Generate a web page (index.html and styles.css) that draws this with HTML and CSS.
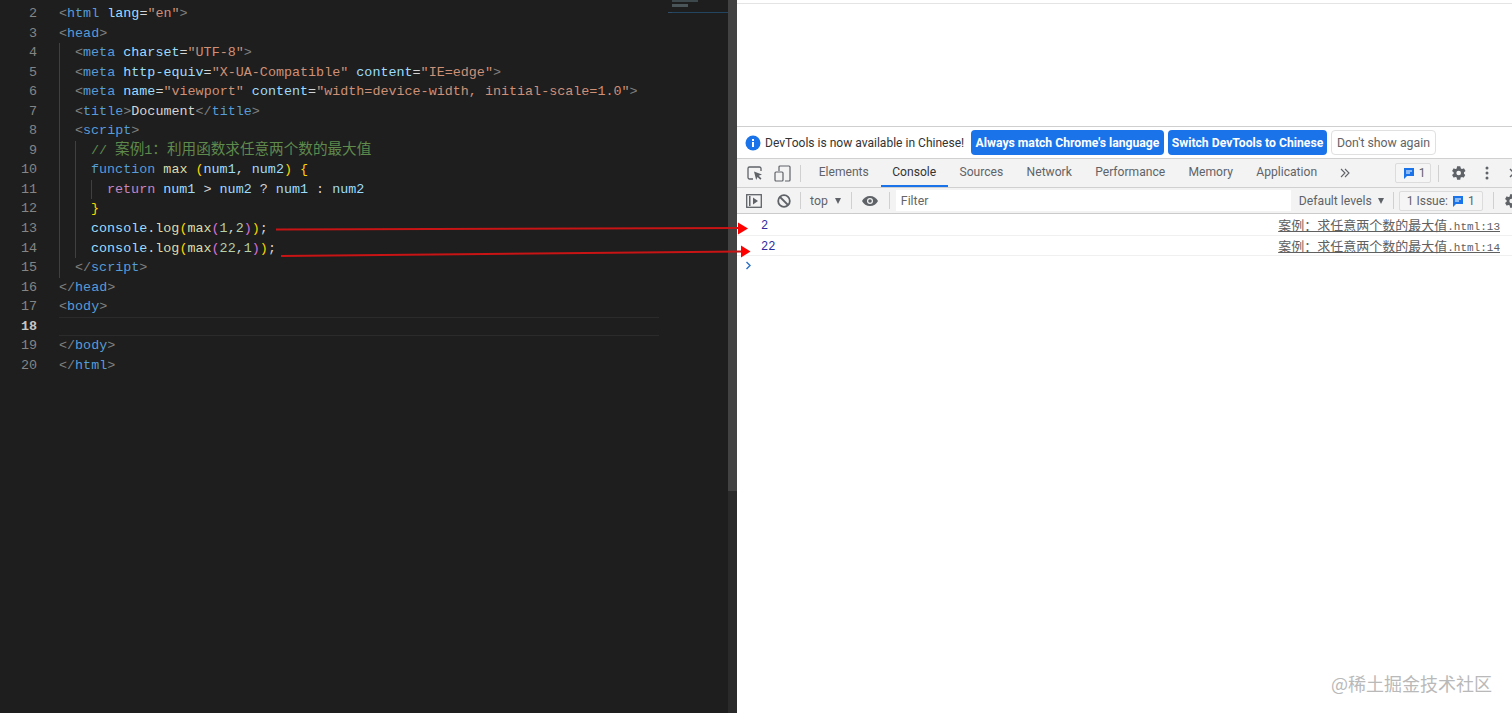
FILE: index.html
```html
<!DOCTYPE html>
<html lang="en">
<head>
    <meta charset="UTF-8">
    <meta name="viewport" content="width=device-width, initial-scale=1.0">
    <title>Max of two numbers</title>
    <link rel="stylesheet" href="styles.css">
</head>
<body>

<div class="page">
    <div class="editor">
        <div class="gutter">
            <div>2</div><div>3</div><div>4</div><div>5</div><div>6</div><div>7</div><div>8</div><div>9</div><div>10</div>
            <div>11</div><div>12</div><div>13</div><div>14</div><div>15</div><div>16</div><div>17</div>
            <div class="active-num">18</div><div>19</div><div>20</div>
        </div>
        <div class="code">
            <div class="line"><i>&lt;</i><b>html</b> <u>lang</u><em>=</em><s>"en"</s><i>&gt;</i></div>
            <div class="line"><i>&lt;</i><b>head</b><i>&gt;</i></div>
            <div class="line"><span class="ind"></span><i>&lt;</i><b>meta</b> <u>charset</u><em>=</em><s>"UTF-8"</s><i>&gt;</i></div>
            <div class="line"><span class="ind"></span><i>&lt;</i><b>meta</b> <u>http-equiv</u><em>=</em><s>"X-UA-Compatible"</s> <u>content</u><em>=</em><s>"IE=edge"</s><i>&gt;</i></div>
            <div class="line"><span class="ind"></span><i>&lt;</i><b>meta</b> <u>name</u><em>=</em><s>"viewport"</s> <u>content</u><em>=</em><s>"width=device-width, initial-scale=1.0"</s><i>&gt;</i></div>
            <div class="line"><span class="ind"></span><i>&lt;</i><b>title</b><i>&gt;</i><em>Document</em><i>&lt;/</i><b>title</b><i>&gt;</i></div>
            <div class="line"><span class="ind"></span><i>&lt;</i><b>script</b><i>&gt;</i></div>
            <div class="line"><span class="ind"></span><span class="ind"></span><span class="comment">// <span class="cjk">案例</span>1<span class="cjk">：利用函数求任意两个数的最大值</span></span></div>
            <div class="line"><span class="ind"></span><span class="ind"></span><b>function</b> <span class="fn">max</span> <span class="y">(</span><u>num1</u><em>,</em> <u>num2</u><span class="y">)</span> <span class="y">{</span></div>
            <div class="line"><span class="ind"></span><span class="ind"></span><span class="ind"></span><span class="kw">return</span> <u>num1</u> <em>&gt;</em> <u>num2</u> <em>?</em> <u>num1</u> <em>:</em> <u>num2</u></div>
            <div class="line"><span class="ind"></span><span class="ind"></span><span class="y">}</span></div>
            <div class="line"><span class="ind"></span><span class="ind"></span><u>console</u><em>.</em><span class="fn">log</span><span class="y">(</span><span class="fn">max</span><span class="p">(</span><span class="num">1</span><em>,</em><span class="num">2</span><span class="p">)</span><span class="y">)</span><em>;</em></div>
            <div class="line"><span class="ind"></span><span class="ind"></span><u>console</u><em>.</em><span class="fn">log</span><span class="y">(</span><span class="fn">max</span><span class="p">(</span><span class="num">22</span><em>,</em><span class="num">1</span><span class="p">)</span><span class="y">)</span><em>;</em></div>
            <div class="line"><span class="ind"></span><i>&lt;/</i><b>script</b><i>&gt;</i></div>
            <div class="line"><i>&lt;/</i><b>head</b><i>&gt;</i></div>
            <div class="line"><i>&lt;</i><b>body</b><i>&gt;</i></div>
            <div class="line current"></div>
            <div class="line"><i>&lt;/</i><b>body</b><i>&gt;</i></div>
            <div class="line"><i>&lt;/</i><b>html</b><i>&gt;</i></div>
        </div>
        <div class="minimap">
            <div class="mini-a"></div>
            <div class="mini-b"></div>
            <div class="mini-c"></div>
        </div>
        <div class="scrollbar"><div class="thumb"></div></div>
    </div>

    <div class="browser">
        <div class="viewport-area"></div>
        <div class="infobar">
            <svg class="info-icon" width="16" height="16" viewBox="0 0 16 16"><circle cx="8" cy="8" r="7.5" fill="#1a73e8"/><rect x="7" y="7" width="2" height="5" fill="#fff"/><rect x="7" y="4" width="2" height="2" fill="#fff"/></svg>
            <span class="info-text">DevTools is now available in Chinese!</span>
            <button class="btn-blue btn-first">Always match Chrome's language</button>
            <button class="btn-blue">Switch DevTools to Chinese</button>
            <button class="btn-plain">Don't show again</button>
        </div>
        <div class="tabbar">
            <svg class="tool-icon icon-inspect" width="16" height="16" viewBox="0 0 16 16"><path d="M6 14H2.5A1.5 1.5 0 0 1 1 12.500V3.500A1.500 1.500 0 0 1 2.500 2h10A1.500 1.500 0 0 1 14 3.500V6" fill="none" stroke="#5f6368" stroke-width="1.300"/><path d="M7 6.500l8 3-3.300 1.300 2.800 2.800-1.200 1.200-2.800-2.800L9.200 15z" fill="#5f6368"/></svg>
            <svg class="tool-icon icon-device" width="17" height="17" viewBox="0 0 17 17"><path d="M5 6V2a1 1 0 0 1 1-1h9a1 1 0 0 1 1 1v13a1 1 0 0 1-1 1h-4" fill="none" stroke="#5f6368" stroke-width="1.200"/><rect x="1" y="7" width="8" height="9" rx="1" fill="none" stroke="#5f6368" stroke-width="1.200"/></svg>
            <span class="sep sep-tabs"></span>
            <span class="tab">Elements</span>
            <span class="tab tab-on">Console</span>
            <span class="tab">Sources</span>
            <span class="tab">Network</span>
            <span class="tab">Performance</span>
            <span class="tab">Memory</span>
            <span class="tab">Application</span>
            <svg class="more-tabs" width="10" height="10" viewBox="0 0 10 10"><path d="M1 1l4 4-4 4M5 1l4 4-4 4" fill="none" stroke="#5f6368" stroke-width="1.100"/></svg>
            <span class="badge badge-tab">
                <svg width="12" height="12" viewBox="0 0 12 12"><path d="M1 1h10v8H4l-3 3z" fill="#1a73e8"/><rect x="3" y="3.500" width="6" height="1" fill="#fff"/><rect x="3" y="5.500" width="4" height="1" fill="#fff"/></svg>
                1
            </span>
            <span class="sep sep-right"></span>
            <svg class="gear" width="16" height="16" viewBox="0 0 24 24"><path fill="#5f6368" d="M19.400 13c.1-.3.100-.7.100-1s0-.7-.1-1l2.100-1.600c.2-.2.200-.4.100-.6l-2-3.500c-.1-.2-.4-.3-.6-.2l-2.500 1c-.5-.4-1.100-.7-1.700-1L14 2.400c0-.2-.2-.4-.5-.4h-4c-.2 0-.4.200-.5.400l-.4 2.700c-.6.200-1.200.6-1.700 1l-2.500-1c-.2-.1-.5 0-.6.200l-2 3.500c-.1.200-.1.500.1.600L4 11c0 .3-.1.700-.1 1s0 .7.100 1l-2.100 1.600c-.2.200-.2.400-.1.600l2 3.500c.1.200.4.300.6.200l2.500-1c.5.400 1.100.7 1.700 1l.4 2.700c0 .2.200.4.500.4h4c.2 0 .5-.2.500-.4l.4-2.700c.6-.2 1.200-.6 1.700-1l2.500 1c.2.100.5 0 .6-.2l2-3.500c.1-.2.100-.5-.1-.6zM11.500 15.500a3.500 3.500 0 1 1 0-7 3.500 3.500 0 0 1 0 7z"/></svg>
            <svg class="kebab" width="4" height="14" viewBox="0 0 4 14"><circle cx="2" cy="2" r="1.500" fill="#5f6368"/><circle cx="2" cy="7" r="1.500" fill="#5f6368"/><circle cx="2" cy="12" r="1.500" fill="#5f6368"/></svg>
            <svg class="close-x" width="10" height="10" viewBox="0 0 10 10"><path d="M1 1l8 8M9 1L1 9" stroke="#5f6368" stroke-width="1.500"/></svg>
        </div>
        <div class="toolbar">
            <svg class="tool-icon icon-sidebar" width="16" height="14" viewBox="0 0 16 14"><rect x=".7" y=".7" width="14.600" height="12.600" fill="none" stroke="#5f6368" stroke-width="1.300"/><rect x="3" y="2" width="1.500" height="10" fill="#5f6368"/><path d="M7 3.500l5 3.500-5 3.500z" fill="#5f6368"/></svg>
            <svg class="tool-icon icon-block" width="14" height="14" viewBox="0 0 14 14"><circle cx="7" cy="7" r="5.800" fill="none" stroke="#5f6368" stroke-width="1.800"/><path d="M3 3l8 8" stroke="#5f6368" stroke-width="1.800"/></svg>
            <span class="sep sep-block"></span>
            <span class="ctx">top</span>
            <span class="tri tri-ctx"></span>
            <span class="sep sep-ctx"></span>
            <svg class="eye" width="16" height="10" viewBox="0 0 16 10"><path d="M8 0C4.500 0 1.500 2 0 5c1.500 3 4.500 5 8 5s6.500-2 8-5c-1.500-3-4.500-5-8-5z" fill="#5f6368"/><circle cx="8" cy="5" r="3" fill="#f3f3f3"/><circle cx="8" cy="5" r="1.800" fill="#5f6368"/></svg>
            <span class="sep sep-eye"></span>
            <div class="filter">Filter</div>
            <span class="levels">Default levels</span>
            <span class="tri tri-levels"></span>
            <span class="sep sep-levels"></span>
            <span class="badge badge-issue">
                1 Issue:
                <svg width="12" height="12" viewBox="0 0 12 12"><path d="M1 1h10v8H4l-3 3z" fill="#1a73e8"/><rect x="3" y="3.500" width="6" height="1" fill="#fff"/><rect x="3" y="5.500" width="4" height="1" fill="#fff"/></svg>
                1
            </span>
            <span class="sep sep-issue"></span>
            <svg class="gear" width="16" height="16" viewBox="0 0 24 24"><path fill="#5f6368" d="M19.400 13c.1-.3.100-.7.100-1s0-.7-.1-1l2.100-1.600c.2-.2.200-.4.100-.6l-2-3.500c-.1-.2-.4-.3-.6-.2l-2.500 1c-.5-.4-1.100-.7-1.700-1L14 2.400c0-.2-.2-.4-.5-.4h-4c-.2 0-.4.200-.5.400l-.4 2.700c-.6.200-1.200.6-1.700 1l-2.500-1c-.2-.1-.5 0-.6.200l-2 3.500c-.1.200-.1.500.1.600L4 11c0 .3-.1.700-.1 1s0 .7.100 1l-2.100 1.600c-.2.200-.2.400-.1.600l2 3.500c.1.200.4.300.6.200l2.500-1c.5.400 1.100.7 1.700 1l.4 2.700c0 .2.200.4.500.4h4c.2 0 .5-.2.500-.4l.4-2.700c.6-.2 1.200-.6 1.700-1l2.500 1c.2.100.5 0 .6-.2l2-3.500c.1-.2.100-.5-.1-.6zM11.500 15.500a3.500 3.500 0 1 1 0-7 3.500 3.500 0 0 1 0 7z"/></svg>
        </div>
        <div class="messages">
            <div class="msg msg-first"><span class="val">2</span><a class="src"><span class="src-cjk">案例：求任意两个数的最大值</span>.html:13</a></div>
            <div class="msg"><span class="val">22</span><a class="src"><span class="src-cjk">案例：求任意两个数的最大值</span>.html:14</a></div>
            <svg class="prompt" width="7" height="9" viewBox="0 0 7 9"><path d="M1.500 1l3.500 3.500L1.500 8" fill="none" stroke="#2a6fc9" stroke-width="1.400"/></svg>
        </div>
    </div>

    <svg class="arrows" width="1512" height="713" viewBox="0 0 1512 713">
        <path d="M276 229.500L740 228" stroke="#c81414" stroke-width="2" fill="none"/>
        <path d="M281 256L742 251.500" stroke="#c81414" stroke-width="2" fill="none"/>
        <path d="M738 222.500L748 228.500 738 234.500z" fill="#f00"/>
        <path d="M741 245.500L750.500 251.500 741 257.500z" fill="#f00"/>
    </svg>

    <div class="watermark">@稀土掘金技术社区</div>
</div>

</body>
</html>
```

FILE: styles.css
```css
* {
    box-sizing: border-box;
}

html, body {
    margin: 0;
    height: 100%;
    overflow: hidden;
}

.page {
    display: flex;
    position: relative;
    width: 1512px;
    height: 713px;
    overflow: hidden;
}

/* editor side */
.editor {
    display: flex;
    position: relative;
    flex: 0 0 737px;
    background-color: #1e1e1e;
    padding-top: 4px;
    font-family: "Liberation Mono", monospace;
    font-size: 13.4px;
    line-height: 19.55px;
}

.gutter {
    width: 37px;
    margin-right: 22px;
    text-align: right;
    color: #858585;
}

.active-num {
    color: #c6c6c6;
    font-weight: bold;
}

.code {
    flex: 1;
}

.line {
    height: 19.55px;
    white-space: pre;
    color: #d4d4d4;
}

.line.current {
    width: 600px;
    border-top: 1px solid #2b2b2b;
    border-bottom: 1px solid #2b2b2b;
}

.ind {
    display: inline-block;
    width: 16px;
    height: 19.55px;
    vertical-align: top;
    border-left: 1px solid #404040;
}

.line i, .line b, .line u, .line em, .line s {
    font-style: normal;
    font-weight: normal;
    text-decoration: none;
}

.line i { color: #808080; }
.line b { color: #569cd6; }
.line u { color: #9cdcfe; }
.line em { color: #d4d4d4; }
.line s { color: #ce9178; }

.comment { color: #5f8a4d; }
.cjk { font-family: "Noto Sans CJK SC", sans-serif; font-size: 14.6px; line-height: 1; }
.fn { color: #dcdcaa; }
.kw { color: #c586c0; }
.num { color: #b5cea8; }
.y { color: #ffd700; }
.p { color: #da70d6; }

.minimap {
    position: absolute;
    left: 668px;
    top: 0;
    width: 60px;
    height: 16px;
}

.mini-a {
    width: 26px;
    height: 2px;
    margin-left: 4px;
    background-color: #3d484c;
}

.mini-b {
    width: 16px;
    height: 3px;
    margin: 2px 0 0 4px;
    background-color: #4a555a;
}

.mini-c {
    height: 1px;
    margin-top: 5px;
    background-color: #24455f;
    border-left: 4px solid #2f4d68;
}

.scrollbar {
    position: absolute;
    right: 0;
    top: 0;
    width: 9px;
    height: 100%;
    background-color: #2a2a2a;
}

.thumb {
    height: 491px;
    background-color: #424242;
}

/* devtools side */
.browser {
    flex: 1;
    min-width: 0;
    display: flex;
    flex-direction: column;
    background-color: #fff;
    font-family: Roboto, "Liberation Sans", sans-serif;
    font-size: 12px;
    color: #5f6368;
}

.viewport-area {
    margin-top: 3px;
    border-top: 1px solid #e4e4e4;
    border-bottom: 1px solid #cfcfcf;
    flex: none;
    height: 124px;
}

.infobar {
    display: flex;
    align-items: center;
    gap: 4px;
    height: 31px;
    flex: none;
    padding-left: 8px;
}

.info-text {
    width: 202px;
    color: #333;
    font-size: 12.05px;
    white-space: nowrap;
}

.btn-blue, .btn-plain {
    height: 25px;
    padding: 0;
    border-radius: 4px;
    font-family: inherit;
    white-space: nowrap;
}

.btn-blue {
    width: 159px;
    background-color: #1a73e8;
    border: none;
    color: #fff;
    font-size: 12.2px;
    font-weight: bold;
}

.btn-first {
    width: 193px;
}

.btn-plain {
    width: 105px;
    background-color: #fff;
    border: 1px solid #e0e0e0;
    color: #5f6368;
    font-size: 12.3px;
}

.tabbar, .toolbar {
    display: flex;
    align-items: center;
    flex: none;
    background-color: #f3f3f3;
    border-top: 1px solid #d0d0d0;
    white-space: nowrap;
}

.tabbar {
    height: 29px;
    padding-left: 10px;
}

.toolbar {
    height: 27px;
    padding-left: 9px;
    border-bottom: 1px solid #cbcbcb;
}

.tool-icon {
    flex: none;
}

.icon-device {
    margin-left: 11px;
}

.sep {
    flex: none;
    width: 1px;
    height: 17px;
    background-color: #d0d0d0;
}

.sep-tabs { margin: 0 6px 0 9px; }

.tab {
    display: flex;
    align-items: center;
    height: 28px;
    padding: 0 11.7px;
    font-size: 12.1px;
    border-bottom: 2px solid transparent;
}

.tab-on {
    color: #333;
    border-bottom-color: #1a73e8;
}

.more-tabs { margin: 0 0 0 11px; flex: none; }

.badge {
    display: flex;
    align-items: center;
    gap: 4px;
    flex: none;
    height: 20px;
    border: 1px solid #dcdcdc;
    border-radius: 2px;
    background-color: #f5f5f5;
    font-size: 12px;
}

.badge-tab {
    width: 36px;
    margin-left: 45px;
    padding-left: 7px;
}

.sep-right { margin: 0 12px 0 7px; }

.gear { flex: none; }

.kebab {
    flex: none;
    margin-left: 18px;
}

.close-x {
    flex: none;
    margin-left: 20px;
}

.icon-block { margin-left: 15px; }
.sep-block { margin: 0 9px 0 9px; }

.ctx { font-size: 12.3px; }

.tri {
    width: 0;
    height: 0;
    flex: none;
    border-left: 3.500px solid transparent;
    border-right: 3.500px solid transparent;
    border-top: 6px solid #5f6368;
}

.tri-ctx { margin-left: 7px; }
.sep-ctx { margin: 0 10px; }
.eye { flex: none; }
.sep-eye { margin: 0 6px 0 11px; }

.filter {
    flex: none;
    width: 395px;
    height: 21px;
    padding: 4px 5px;
    background-color: #fff;
    font-size: 12.3px;
    color: #666;
}

.levels {
    margin-left: 8px;
    font-size: 12.2px;
}

.tri-levels { margin-left: 6px; }
.sep-levels { margin: 0 5px 0 9px; }

.badge-issue {
    width: 84px;
    justify-content: center;
}

.sep-issue { margin: 0 10px; }

.messages {
    position: relative;
    flex: 1;
    font-family: "Liberation Mono", monospace;
}

.msg {
    display: flex;
    justify-content: space-between;
    align-items: center;
    height: 20px;
    padding: 0 12px 0 24px;
    border-bottom: 1px solid #f0f0f0;
}

.msg-first {
    height: 22px;
}

.val {
    padding-top: 2px;
    color: #2c2c9e;
    font-size: 12px;
}

.src {
    color: #606060;
    font-size: 11px;
    text-decoration: underline;
}

.src-cjk {
    font-family: "Noto Sans CJK SC", sans-serif;
    font-size: 13px;
}

.prompt {
    display: block;
    margin: 5px 0 0 8px;
}

.arrows {
    position: absolute;
    left: 0;
    top: 0;
}

.watermark {
    position: absolute;
    left: 1331px;
    top: 670px;
    font-family: "Noto Sans CJK SC", sans-serif;
    font-size: 18px;
    color: #b9b9b9;
    white-space: nowrap;
}
```
